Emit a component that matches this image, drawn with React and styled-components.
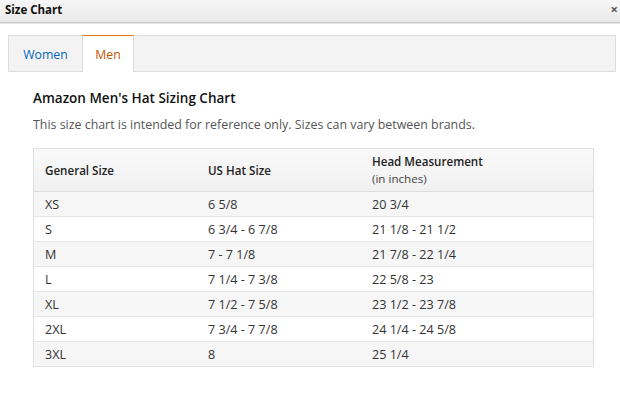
import React from 'react';
import styled, { createGlobalStyle } from 'styled-components';

const GlobalStyle = createGlobalStyle`
  html, body {
    margin: 0;
    padding: 0;
    background: #fff;
  }
  body {
    font-family: "Open Sans", "Noto Sans", Arial, sans-serif;
    color: #111;
  }
`;

const Modal = styled.div`
  width: 620px;
  height: 396px;
  background: #fff;
  overflow: hidden;
`;

const Header = styled.div`
  height: 23px;
  box-sizing: border-box;
  display: flex;
  align-items: center;
  justify-content: space-between;
  padding: 0 2px 4px 5px;
  background: linear-gradient(#f7f7f7, #e9e9e9);
  border-bottom: 1px solid #c8c8c8;
  box-shadow: 0 1px 0 #e4e4e4;
`;

const Title = styled.h1`
  margin: 0;
  font-size: 11.5px;
  font-weight: 700;
  color: #111;
`;

const Close = styled.span`
  font-size: 13px;
  font-weight: 700;
  color: #555;
  line-height: 1;
`;

const Body = styled.div`
  padding: 12px 4px 0 8px;
`;

const Tabs = styled.div`
  display: flex;
  height: 35px;
  background: #f3f3f3;
  border: 1px solid #ddd;
`;

const Tab = styled.div`
  display: flex;
  align-items: center;
  justify-content: center;
  box-sizing: border-box;
  width: ${({ w }) => w}px;
  margin: -1px 0;
  font-size: 12.3px;
  color: ${({ active }) => (active ? '#c45500' : '#0066c0')};
  background: ${({ active }) => (active ? '#fff' : 'transparent')};
  border-top: 1px solid ${({ active }) => (active ? '#e47911' : 'transparent')};
  border-left: 1px solid ${({ active }) => (active ? '#ddd' : 'transparent')};
  border-right: 1px solid ${({ active }) => (active ? '#ddd' : 'transparent')};
`;

const Content = styled.div`
  padding: 16px 26px 0 33px;
`;

const Heading = styled.h2`
  margin: 0;
  font-size: 13.5px;
  font-weight: 600;
  color: #111;
  line-height: 20px;
`;

const Note = styled.p`
  margin: 8px 0 14px;
  font-size: 12.4px;
  color: #555;
  line-height: 18px;
`;

const Table = styled.div`
  display: grid;
  grid-template-columns: 163px 164px 1fr;
  border: 1px solid #e0e0e0;
  font-size: 12.6px;
  color: #333;
`;

const HeadCell = styled.div`
  height: 42px;
  display: flex;
  flex-direction: column;
  justify-content: center;
  padding-left: 11px;
  background: linear-gradient(#f9f9f9, #f1f1f1);
  border-bottom: 1px solid #ddd;
  font-size: 11.6px;
  font-weight: 600;
  color: #222;
  line-height: 17px;
`;

const Sub = styled.span`
  font-weight: 400;
  color: #444;
`;

const Cell = styled.div`
  height: 24px;
  display: flex;
  align-items: center;
  padding-left: 11px;
  background: ${({ odd }) => (odd ? '#f6f6f6' : '#fff')};
  border-top: ${({ first }) => (first ? 'none' : '1px solid #e7e7e7')};
`;

const rows = [
  ['XS', '6 5/8', '20 3/4'],
  ['S', '6 3/4 - 6 7/8', '21 1/8 - 21 1/2'],
  ['M', '7 - 7 1/8', '21 7/8 - 22 1/4'],
  ['L', '7 1/4 - 7 3/8', '22 5/8 - 23'],
  ['XL', '7 1/2 - 7 5/8', '23 1/2 - 23 7/8'],
  ['2XL', '7 3/4 - 7 7/8', '24 1/4 - 24 5/8'],
  ['3XL', '8', '25 1/4'],
];

export default function App() {
  return (
    <Modal>
      <GlobalStyle />
      <Header>
        <Title>Size Chart</Title>
        <Close>×</Close>
      </Header>
      <Body>
        <Tabs>
          <Tab w={73}>Women</Tab>
          <Tab w={52} active>
            Men
          </Tab>
        </Tabs>
      </Body>
      <Content>
        <Heading>Amazon Men's Hat Sizing Chart</Heading>
        <Note>This size chart is intended for reference only. Sizes can vary between brands.</Note>
        <Table>
          <HeadCell>General Size</HeadCell>
          <HeadCell>US Hat Size</HeadCell>
          <HeadCell>
            Head Measurement
            <Sub>(in inches)</Sub>
          </HeadCell>
          {rows.map((r, i) =>
            r.map((v, j) => (
              <Cell key={`${i}-${j}`} odd={i % 2 === 0} first={i === 0}>
                {v}
              </Cell>
            ))
          )}
        </Table>
      </Content>
    </Modal>
  );
}
